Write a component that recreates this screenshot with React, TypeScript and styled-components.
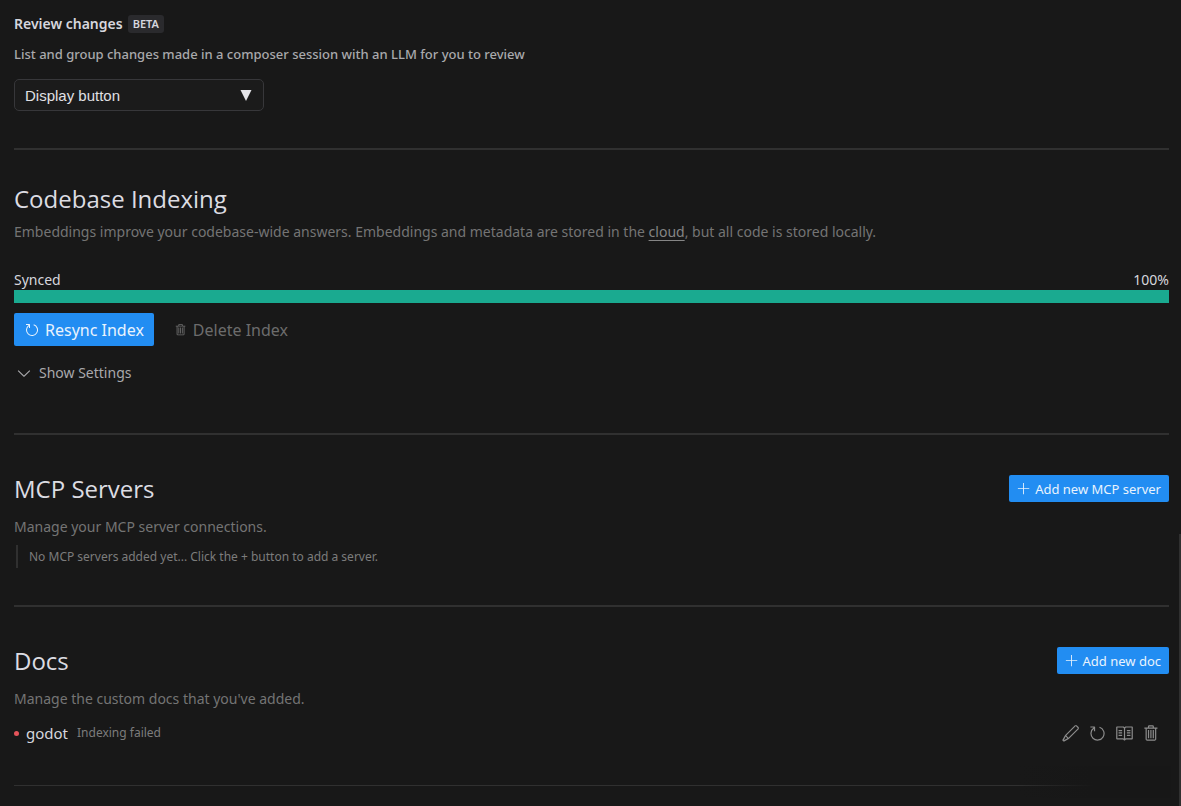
import React from "react";
import styled, { createGlobalStyle } from "styled-components";
import { VscAdd, VscBook, VscChevronDown, VscEdit, VscRefresh, VscTrash } from "react-icons/vsc";

const GlobalStyle = createGlobalStyle`
  * { box-sizing: border-box; }
  body {
    margin: 0;
    background: #181818;
    color: #d6d6dd;
    font-family: "Noto Sans", "Open Sans", sans-serif;
    font-size: 14px;
    line-height: 24px;
  }
  h2, h3, p, ul { margin: 0; padding: 0; }
  button { font: inherit; border: 0; padding: 0; background: none; cursor: pointer; }
  svg { display: block; flex: none; }
`;

const Page = styled.main`
  position: relative;
  min-height: 100vh;
  padding: 0 12px 0 14px;
  overflow: hidden;
`;

const Section = styled.section<{ $top: number; $bottom: number; $thin?: boolean }>`
  display: flex;
  flex-direction: column;
  padding: ${(p) => p.$top}px 0 ${(p) => p.$bottom}px;
  border-bottom: ${(p) => (p.$thin ? 1 : 2)}px solid #303030;
`;

const Label = styled.label`
  display: flex;
  align-items: center;
  gap: 5px;
  font-size: 14px;
  font-weight: 600;
  line-height: 22px;
`;

const Badge = styled.span`
  padding: 0 5px;
  border-radius: 3px;
  background: #2a2a2d;
  font-size: 11px;
  font-weight: 600;
  line-height: 18px;
`;

const Note = styled.p`
  margin-top: 9px;
  color: #a9a9ac;
  font-size: 13px;
  font-weight: 500;
  line-height: 20px;
`;

const SelectBox = styled.div`
  display: grid;
  align-items: center;
  width: 250px;
  margin-top: 15px;
  & > * { grid-area: 1 / 1; }
`;

const Select = styled.select`
  appearance: none;
  height: 32px;
  padding: 0 10px;
  border: 1px solid #37373a;
  border-radius: 5px;
  background: #1b1b1b;
  color: #e0e0e4;
  font: 15px "Liberation Sans", Arial, sans-serif;
`;

const SelectArrow = styled.svg`
  justify-self: end;
  margin-right: 12px;
  pointer-events: none;
`;

const Heading = styled.h2`
  color: #dcdce2;
  font-family: "Open Sans", "Noto Sans", sans-serif;
  font-size: 24px;
  font-weight: 400;
  line-height: 32px;
`;

const HeadingRow = styled.div`
  display: flex;
  align-items: center;
  justify-content: space-between;
  height: 31px;
`;

const Description = styled.p<{ $gap: number }>`
  margin-top: ${(p) => p.$gap}px;
  color: #747474;
`;

const TextLink = styled.a`
  color: #858585;
  text-decoration: underline;
  text-underline-offset: 3px;
`;

const SyncRow = styled.div`
  display: flex;
  justify-content: space-between;
  margin-top: 26px;
  line-height: 20px;
`;

const Track = styled.div`
  height: 13px;
  background: #2a2a2a;
`;

const Fill = styled.div`
  height: 100%;
  background: #1aaa90;
`;

const Actions = styled.div`
  display: flex;
  gap: 20px;
  margin-top: 10px;
`;

const ActionButton = styled.button<{ $primary?: boolean }>`
  display: flex;
  align-items: center;
  gap: 5px;
  height: 33px;
  padding: 0 ${(p) => (p.$primary ? 10 : 0)}px;
  border-radius: 2px;
  background: ${(p) => (p.$primary ? "#228df2" : "none")};
  color: ${(p) => (p.$primary ? "#e9f3fd" : "#6c6c6c")};
  font-size: 16px;
`;

const Disclosure = styled.button`
  display: flex;
  align-items: center;
  align-self: flex-start;
  gap: 5px;
  margin-top: 15px;
  color: #a9a9ac;
`;

const AddButton = styled.button`
  display: flex;
  align-items: center;
  gap: 4px;
  height: 27px;
  padding: 0 8px;
  border-radius: 2px;
  background: #228df2;
  color: #e9f3fd;
  font-size: 13px;
`;

const EmptyNote = styled.p`
  margin: 6px 0 0 2px;
  padding-left: 11px;
  border-left: 2px solid #303030;
  color: #7c7c7c;
  font-size: 12px;
  line-height: 23px;
`;

const DocList = styled.ul`
  margin-top: 10px;
  list-style: none;
`;

const DocRow = styled.li`
  display: flex;
  align-items: center;
`;

const StatusDot = styled.span`
  width: 5px;
  height: 5px;
  border-radius: 50%;
  background: #e5545a;
`;

const DocName = styled.span`
  margin: 0 9px 0 7px;
  font-size: 15px;
`;

const DocStatus = styled.span`
  color: #7c7c7c;
  font-size: 12px;
`;

const DocActions = styled.div`
  display: flex;
  gap: 8px;
  margin-left: auto;
  padding-right: 8px;
`;

const IconButton = styled.button`
  color: #8c8c8c;
`;

const ScrollThumb = styled.div`
  position: absolute;
  top: 534px;
  right: 0;
  bottom: 0;
  width: 2px;
  background: #303030;
`;

const Smudge = styled.div`
  position: absolute;
  right: 10px;
  bottom: 8px;
  width: 170px;
  height: 32px;
  background: linear-gradient(90deg, transparent 10%, #171717 55%);
`;

const docs = [{ name: "godot", status: "Indexing failed" }];
const docActions = [
  { label: "Edit", Icon: VscEdit },
  { label: "Reindex", Icon: VscRefresh },
  { label: "Open", Icon: VscBook },
  { label: "Delete", Icon: VscTrash },
];

export default function App() {
  const progress = 100;
  return (
    <>
      <GlobalStyle />
      <Page>
        <Section $top={13} $bottom={37}>
          <Label htmlFor="review">
            Review changes <Badge>BETA</Badge>
          </Label>
          <Note>List and group changes made in a composer session with an LLM for you to review</Note>
          <SelectBox>
            <Select id="review" defaultValue="button">
              <option value="button">Display button</option>
            </Select>
            <SelectArrow width="12" height="11" viewBox="0 0 12 11" aria-hidden="true">
              <path d="M0.5 0H11.5L6 11Z" fill="#e4e4e8" />
            </SelectArrow>
          </SelectBox>
        </Section>

        <Section $top={33} $bottom={48}>
          <Heading>Codebase Indexing</Heading>
          <Description $gap={5}>
            Embeddings improve your codebase-wide answers. Embeddings and metadata are stored in the{" "}
            <TextLink href="#cloud">cloud</TextLink>, but all code is stored locally.
          </Description>
          <SyncRow>
            <span>Synced</span>
            <span>{progress}%</span>
          </SyncRow>
          <Track role="progressbar" aria-label="Synced" aria-valuenow={progress}>
            <Fill style={{ width: `${progress}%` }} />
          </Track>
          <Actions>
            <ActionButton type="button" $primary>
              <VscRefresh size={16} /> Resync Index
            </ActionButton>
            <ActionButton type="button">
              <VscTrash size={14} /> Delete Index
            </ActionButton>
          </Actions>
          <Disclosure type="button" aria-expanded={false}>
            <VscChevronDown size={20} /> Show Settings
          </Disclosure>
        </Section>

        <Section $top={38} $bottom={37}>
          <HeadingRow>
            <Heading>MCP Servers</Heading>
            <AddButton type="button">
              <VscAdd size={14} /> Add new MCP server
            </AddButton>
          </HeadingRow>
          <Description $gap={11}>Manage your MCP server connections.</Description>
          <EmptyNote>No MCP servers added yet... Click the + button to add a server.</EmptyNote>
        </Section>

        <Section $top={38} $bottom={40} $thin>
          <HeadingRow>
            <Heading>Docs</Heading>
            <AddButton type="button">
              <VscAdd size={14} /> Add new doc
            </AddButton>
          </HeadingRow>
          <Description $gap={11}>Manage the custom docs that you've added.</Description>
          <DocList>
            {docs.map((doc) => (
              <DocRow key={doc.name}>
                <StatusDot />
                <DocName>{doc.name}</DocName>
                <DocStatus>{doc.status}</DocStatus>
                <DocActions>
                  {docActions.map(({ label, Icon }) => (
                    <IconButton key={label} type="button" aria-label={label}>
                      <Icon size={19} />
                    </IconButton>
                  ))}
                </DocActions>
              </DocRow>
            ))}
          </DocList>
        </Section>
        <ScrollThumb />
        <Smudge />
      </Page>
    </>
  );
}
